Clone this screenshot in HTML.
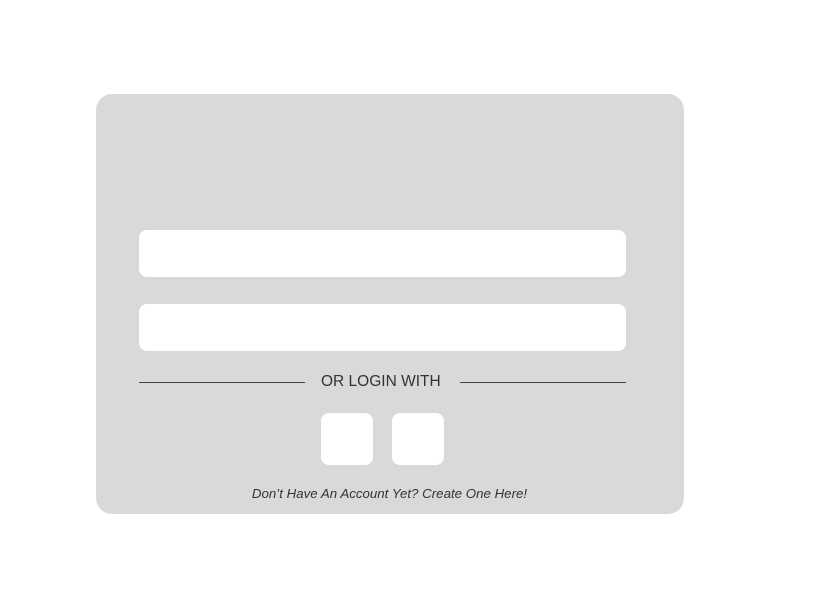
<!DOCTYPE html>
<html><head><style>
body{margin:0;width:815px;height:601px;background:#fff;position:relative;font-family:"Liberation Sans",sans-serif;overflow:hidden}
.card{position:absolute;left:96px;top:94px;width:588px;height:420px;background:#d9d9d9;border-radius:16px}
.in{position:absolute;left:139px;width:487px;height:47px;background:#fff;border-radius:8px}
.ln{position:absolute;top:382px;height:1px;background:#444}
.sq{position:absolute;top:413px;width:52px;height:52px;background:#fff;border-radius:8px}
.t{position:absolute;color:#333;white-space:nowrap}
</style></head><body>
<div class="card"></div>
<div class="in" style="top:230px"></div>
<div class="in" style="top:304px"></div>
<div class="ln" style="left:139px;width:166px"></div>
<div class="ln" style="left:460px;width:166px"></div>
<div class="t" style="left:321px;top:373px;font-size:15.5px;width:119px;text-align:center">OR LOGIN WITH</div>
<div class="sq" style="left:321px"></div>
<div class="sq" style="left:392px"></div>
<div class="t" style="left:250px;top:486px;font-size:13.3px;font-style:italic;width:279px;text-align:center">Don’t Have An Account Yet? Create One Here!</div>
</body></html>
